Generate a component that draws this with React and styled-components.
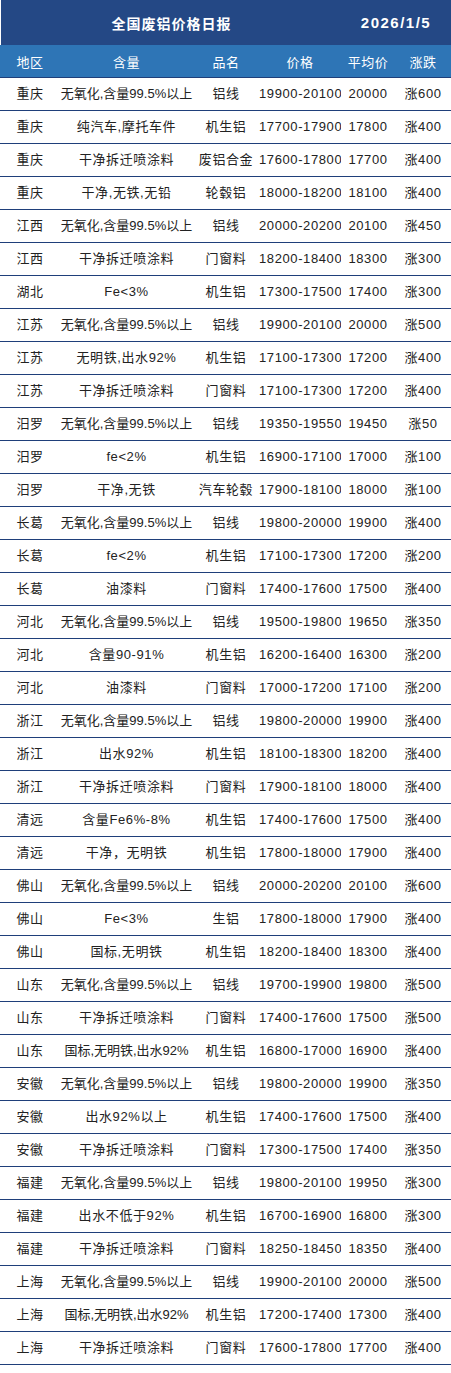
import React from "react";
import styled, { createGlobalStyle } from "styled-components";

const rows = [
  ["重庆", "无氧化,含量99.5%以上", "铝线", "19900-20100", "20000", "涨600"],
  ["重庆", "纯汽车,摩托车件", "机生铝", "17700-17900", "17800", "涨400"],
  ["重庆", "干净拆迁喷涂料", "废铝合金", "17600-17800", "17700", "涨400"],
  ["重庆", "干净,无铁,无铅", "轮毂铝", "18000-18200", "18100", "涨400"],
  ["江西", "无氧化,含量99.5%以上", "铝线", "20000-20200", "20100", "涨450"],
  ["江西", "干净拆迁喷涂料", "门窗料", "18200-18400", "18300", "涨300"],
  ["湖北", "Fe<3%", "机生铝", "17300-17500", "17400", "涨300"],
  ["江苏", "无氧化,含量99.5%以上", "铝线", "19900-20100", "20000", "涨500"],
  ["江苏", "无明铁,出水92%", "机生铝", "17100-17300", "17200", "涨400"],
  ["江苏", "干净拆迁喷涂料", "门窗料", "17100-17300", "17200", "涨400"],
  ["汨罗", "无氧化,含量99.5%以上", "铝线", "19350-19550", "19450", "涨50"],
  ["汨罗", "fe<2%", "机生铝", "16900-17100", "17000", "涨100"],
  ["汨罗", "干净,无铁", "汽车轮毂", "17900-18100", "18000", "涨100"],
  ["长葛", "无氧化,含量99.5%以上", "铝线", "19800-20000", "19900", "涨400"],
  ["长葛", "fe<2%", "机生铝", "17100-17300", "17200", "涨200"],
  ["长葛", "油漆料", "门窗料", "17400-17600", "17500", "涨400"],
  ["河北", "无氧化,含量99.5%以上", "铝线", "19500-19800", "19650", "涨350"],
  ["河北", "含量90-91%", "机生铝", "16200-16400", "16300", "涨200"],
  ["河北", "油漆料", "门窗料", "17000-17200", "17100", "涨200"],
  ["浙江", "无氧化,含量99.5%以上", "铝线", "19800-20000", "19900", "涨400"],
  ["浙江", "出水92%", "机生铝", "18100-18300", "18200", "涨400"],
  ["浙江", "干净拆迁喷涂料", "门窗料", "17900-18100", "18000", "涨400"],
  ["清远", "含量Fe6%-8%", "机生铝", "17400-17600", "17500", "涨400"],
  ["清远", "干净，无明铁", "机生铝", "17800-18000", "17900", "涨400"],
  ["佛山", "无氧化,含量99.5%以上", "铝线", "20000-20200", "20100", "涨600"],
  ["佛山", "Fe<3%", "生铝", "17800-18000", "17900", "涨400"],
  ["佛山", "国标,无明铁", "机生铝", "18200-18400", "18300", "涨400"],
  ["山东", "无氧化,含量99.5%以上", "铝线", "19700-19900", "19800", "涨500"],
  ["山东", "干净拆迁喷涂料", "门窗料", "17400-17600", "17500", "涨500"],
  ["山东", "国标,无明铁,出水92%", "机生铝", "16800-17000", "16900", "涨400"],
  ["安徽", "无氧化,含量99.5%以上", "铝线", "19800-20000", "19900", "涨350"],
  ["安徽", "出水92%以上", "机生铝", "17400-17600", "17500", "涨400"],
  ["安徽", "干净拆迁喷涂料", "门窗料", "17300-17500", "17400", "涨350"],
  ["福建", "无氧化,含量99.5%以上", "铝线", "19800-20100", "19950", "涨300"],
  ["福建", "出水不低于92%", "机生铝", "16700-16900", "16800", "涨300"],
  ["福建", "干净拆迁喷涂料", "门窗料", "18250-18450", "18350", "涨400"],
  ["上海", "无氧化,含量99.5%以上", "铝线", "19900-20100", "20000", "涨500"],
  ["上海", "国标,无明铁,出水92%", "机生铝", "17200-17400", "17300", "涨400"],
  ["上海", "干净拆迁喷涂料", "门窗料", "17600-17800", "17700", "涨400"],
];

const headers = ["地区", "含量", "品名", "价格", "平均价", "涨跌"];

export default function App() {
  return (
    <>
      <GlobalStyle />
      <Sheet>
        <TitleBar>
          <Title>全国废铝价格日报</Title>
          <DateText>2026/1/5</DateText>
        </TitleBar>
        <HeadRow>
          {headers.map((h) => (
            <HeadCell key={h}>{h}</HeadCell>
          ))}
        </HeadRow>
        {rows.map((r, i) => (
          <Row key={i}>
            {r.map((c, j) => (
              <Cell key={j} $tight={j === 1 && c.length > 11}>
                {c}
              </Cell>
            ))}
          </Row>
        ))}
      </Sheet>
    </>
  );
}

const GlobalStyle = createGlobalStyle`
  html, body {
    margin: 0;
    padding: 0;
    background: #ffffff;
  }
  body {
    font-family: "Liberation Sans", "Noto Sans CJK SC", sans-serif;
  }
`;

const cols = "60px 133px 66px 82px 54px 56px";

const Sheet = styled.div`
  width: 451px;
  display: flex;
  flex-direction: column;
`;

const TitleBar = styled.div`
  display: grid;
  grid-template-columns: 340px 110px;
  height: 45px;
  margin-left: 1px;
  background-color: #244885;
  color: #ffffff;
  align-items: center;
  font-weight: bold;
`;

const Title = styled.div`
  text-align: center;
  font-size: 14px;
  letter-spacing: 1px;
  padding-left: 1px;
`;

const DateText = styled.div`
  text-align: center;
  font-size: 15px;
  letter-spacing: 1.5px;
`;

const HeadRow = styled.div`
  display: grid;
  grid-template-columns: ${cols};
  height: 32px;
  background-color: #2e75b6;
  border-bottom: 1px solid #1f3f7a;
`;

const HeadCell = styled.div`
  display: flex;
  align-items: center;
  justify-content: center;
  color: #ffffff;
  font-size: 13px;
  letter-spacing: 0.5px;
`;

const Row = styled.div`
  display: grid;
  grid-template-columns: ${cols};
  height: 32px;
  border-bottom: 1px solid #1f3f7a;
`;

const Cell = styled.div`
  line-height: 32px;
  text-align: center;
  white-space: nowrap;
  overflow: hidden;
  color: #222222;
  font-size: 13px;
  letter-spacing: ${(p) => (p.$tight ? "0" : "0.6px")};
`;
